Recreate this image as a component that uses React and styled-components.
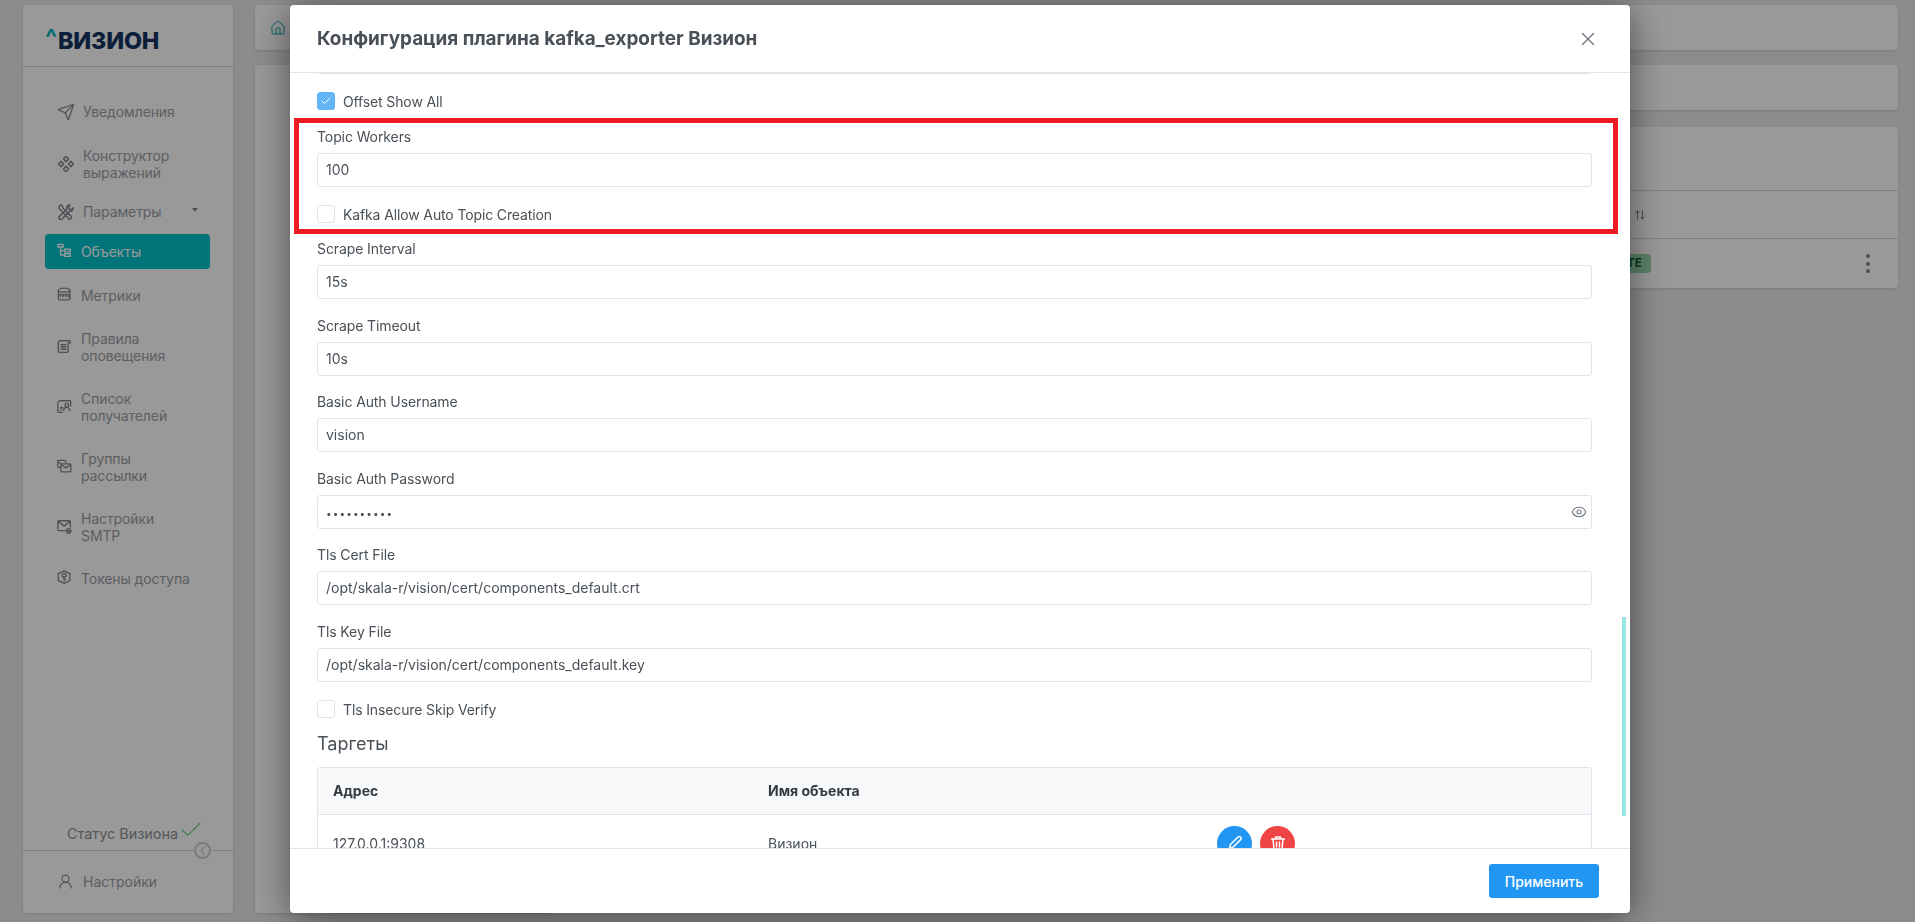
import React from "react";
import styled, { createGlobalStyle } from "styled-components";
import { X, Eye, Check, ChevronLeft, Home, ArrowUpDown, Send, UserRound } from "lucide-react";

const Global = createGlobalStyle`
  html, body { margin: 0; padding: 0; height: 100%; overflow: hidden; }
  body { font-family: Inter, "Noto Sans", sans-serif; font-size: 14px; color: #495057; background: #e8eaed; }
  * { box-sizing: border-box; }
`;

const Page = styled.div`
  display: flex; gap: 22px; height: 922px; padding: 5px 17px 9px 23px;
`;
const Card = styled.div`
  background: #fff; border-radius: 4px; box-shadow: 0 1px 3px rgba(0,0,0,.12);
`;
const Sidebar = styled(Card)`
  width: 210px; flex: none; display: flex; flex-direction: column;
`;
const LogoBar = styled.div`
  height: 62px; flex: none; padding: 20px 0 0 22px; border-bottom: 1px solid #d5d8dd;
  display: flex; align-items: flex-start;
`;
const Caret = styled.span`
  color: #00b5bb; font: 700 25px/20px Inter, sans-serif; width: 13px; margin-top: 3px; flex: none;
`;
const LogoWord = styled.span`
  color: #14335f; font: 800 23.4px/34px Inter, sans-serif; letter-spacing: -.2px; margin-top: -1px;
`;
const Nav = styled.nav`
  display: flex; flex-direction: column; padding: 27px 23px 0 22px; flex: 1;
`;
const NavItem = styled.div`
  display: flex; align-items: center; gap: 8px; padding: 0 12px; border-radius: 4px; position: relative;
  min-height: ${p => (p.$double ? 51 : 35)}px;
  margin-bottom: ${p => p.$mb ?? 9}px;
  background: ${p => (p.$active ? "#00c1c8" : "transparent")};
  color: ${p => (p.$active ? "#fff" : "#9a9ea5")};
  font-size: 14px; line-height: 17px; letter-spacing: -.1px;
  svg { flex: none; color: ${p => (p.$active ? "#fff" : "#84888e")}; }
`;
const DropArrow = styled.span`
  position: absolute; right: 12px; top: 14px; width: 0; height: 0;
  border: 3.5px solid transparent; border-top: 4px solid #84888e;
`;
const StatusRow = styled.div`
  display: flex; align-items: center; gap: 0; padding-left: 44px; height: 34px; color: #8e9298; font-size: 14.4px;
  svg { color: #6fd08c; margin-top: -6px; }
`;
const SideFooter = styled.div`
  position: relative; height: 63px; border-top: 1px solid #d5d8dd; padding: 13px 0 0 34px;
  display: flex; gap: 9px; align-items: flex-start; color: #9a9ea5; line-height: 36px;
  svg { margin-top: 9px; color: #84888e; }
`;
const FoldButton = styled.span`
  position: absolute; right: 22px; top: -9px; width: 17px; height: 17px; border-radius: 50%;
  border: 2px solid #c9ccd1; background: #fff; display: flex; align-items: center; justify-content: center; color: #c9ccd1;
  svg { margin: 0; color: #c9ccd1; }
`;
const Main = styled.main`
  flex: 1; display: flex; flex-direction: column; gap: 15px; min-width: 0;
`;
const Crumbs = styled(Card)`
  height: 45px; flex: none; display: flex; align-items: center; padding-left: 15px; color: #00a3a8;
`;
const Columns = styled.div`
  flex: 1; display: flex; gap: 17px; min-height: 0;
`;
const TreePanel = styled(Card)`
  width: 300px; flex: none;
`;
const RightColumn = styled.div`
  flex: 1; display: flex; flex-direction: column; gap: 17px;
`;
const Filters = styled(Card)`
  height: 45px;
`;
const TableCard = styled(Card)`
  display: flex; flex-direction: column;
`;
const TableHead = styled.div`
  height: 64px; border-bottom: 1px solid #d5d8dd;
`;
const SortRow = styled.div`
  height: 48px; border-bottom: 1px solid #d5d8dd; display: flex; align-items: center; justify-content: flex-end;
  padding-right: 252px; color: #6f7378;
`;
const DataRow = styled.div`
  height: 49px; display: flex; align-items: center; justify-content: flex-end; padding-right: 28px; gap: 215px;
`;
const Badge = styled.span`
  height: 19px; padding: 0 9px; border-radius: 4px; background: #9ad9ac; color: #0d5f2c;
  font: 700 11.5px/19px Inter, sans-serif; letter-spacing: .3px;
`;
const Dots = styled.span`
  display: flex; flex-direction: column; gap: 3.5px;
  i { width: 4px; height: 4px; border-radius: 50%; background: #7e8388; display: block; }
`;

const Overlay = styled.div`
  position: fixed; inset: 0; background: rgba(0,0,0,.4); display: flex; padding: 5px 285px 9.5px 290px;
`;
const Modal = styled.section`
  flex: 1; background: #fff; border-radius: 4px; display: flex; flex-direction: column;
  box-shadow: 0 4px 36px rgba(0,0,0,.5); position: relative; overflow: hidden;
`;
const ModalHeader = styled.header`
  height: 68px; flex: none; border-bottom: 1px solid #e3e5ea; display: flex; align-items: center;
  justify-content: space-between; padding: 0 31px 0 27px;
`;
const Title = styled.h2`
  margin: 0; font: 700 18.9px/24px Inter, sans-serif; color: #495057;
`;
const CloseBtn = styled.span`
  display: flex; color: #6c757d;
`;
const ModalBody = styled.div`
  flex: 1; min-height: 0; overflow: hidden; padding: 0 38px 0 27px; position: relative;
`;
const ScrollContent = styled.div`
  margin-top: -33px; display: flex; flex-direction: column;
`;
const Field = styled.div`
  margin-bottom: 16.6px;
`;
const Label = styled.div`
  font-size: 14px; line-height: 20px; margin-bottom: 6px; color: #495057; letter-spacing: -.1px;
`;
const Input = styled.div`
  height: 34px; border: 1px solid #e1e4e9; border-radius: 3px; padding: 0 8px; line-height: 32px;
  font-size: 14px; color: #495057; position: relative; white-space: nowrap;
`;
const Secret = styled.span`
  letter-spacing: 1.1px; font-size: 10px;
`;
const EyeSlot = styled.span`
  position: absolute; right: 4px; top: 8px; display: flex; color: #6c757d;
`;
const CheckRow = styled.div`
  display: flex; align-items: center; gap: 8px; height: 18px; margin: 1.4px 0 ${p => p.$mb ?? 16}px; letter-spacing: -.13px;
`;
const CheckText = styled.span`
  line-height: 18px; padding-top: 2px;
`;
const Box = styled.span`
  width: 18px; height: 18px; flex: none; border-radius: 3px; display: flex; align-items: center; justify-content: center;
  background: ${p => (p.$on ? "#64b5f6" : "#fff")};
  border: 1.5px solid ${p => (p.$on ? "#64b5f6" : "#dfe2e7")};
  color: #fff;
`;
const Highlighted = styled.div`
  position: relative; display: flex; flex-direction: column;
  &::after {
    content: ""; position: absolute; inset: -9px -26px 5px -23px; border: 5px solid #ed1c24; pointer-events: none;
  }
`;
const SectionTitle = styled.h3`
  margin: -2px 0 11px; font: 400 18px/24px Inter, sans-serif; color: #495057;
`;
const Table = styled.div`
  border: 1px solid #e1e4e9; border-radius: 3px 3px 0 0;
`;
const Row = styled.div`
  display: grid; grid-template-columns: 435px 449px 1fr; align-items: center; padding-left: 15px;
  height: ${p => (p.$head ? 47 : 58)}px;
  background: ${p => (p.$head ? "#f8f9fa" : "#fff")};
  font-weight: ${p => (p.$head ? 700 : 400)};
  color: ${p => (p.$head ? "#343a40" : "#495057")};
  border-bottom: 1px solid #e1e4e9;
`;
const Actions = styled.div`
  display: flex; gap: 8px;
`;
const RoundBtn = styled.span`
  width: 35px; height: 35px; border-radius: 50%; display: flex; align-items: center; justify-content: center;
  background: ${p => p.$color}; color: #fff;
`;
const Scrollbar = styled.div`
  position: absolute; right: 4px; top: 544px; width: 4px; height: 199px; background: #98e5e5;
`;
const ModalFooter = styled.footer`
  height: 65px; flex: none; border-top: 1px solid #e3e5ea; display: flex; align-items: center; justify-content: flex-end;
  padding: 0 31px 0 0;
`;
const Apply = styled.button`
  width: 110px; height: 34px; border: 0; border-radius: 3px; background: #2196f3; color: #fff;
  font: 500 14px/34px Inter, sans-serif;
`;

const Ico = ({ s = 18, children }) => (
  <svg width={s} height={s} viewBox="0 0 18 18" fill="none" stroke="currentColor" strokeWidth="1.5" strokeLinecap="round" strokeLinejoin="round">{children}</svg>
);
const DiamondsIcon = () => (
  <Ico><path d="M9 1.5 11.6 4 9 6.6 6.4 4ZM9 11.4 11.6 14 9 16.5 6.4 14ZM4 6.4 6.6 9 4 11.6 1.5 9ZM14 6.4 16.5 9 14 11.6 11.4 9Z" /></Ico>
);
const ToolsIcon = () => (
  <Ico><path d="M2 3.5 3.5 2 5.5 3.2 5.8 5 14.5 13.7A1.9 1.9 0 0 1 12 16L3.5 7 2 5.5ZM13 1.8A3.4 3.4 0 0 0 9.8 6L2.4 13.4A1.8 1.8 0 0 0 5 16L12.2 8.4A3.4 3.4 0 0 0 16.2 4.8L14 6.8 11.9 6 11.4 4Z" /></Ico>
);
const TreeIcon = () => (
  <Ico s={16}><rect x="1" y="1.5" width="6" height="3" /><rect x="8.5" y="7" width="6.5" height="3" /><rect x="8.5" y="12" width="6.5" height="3" /><path d="M4 4.5V13.5H8.5M4 8.5H8.5" /></Ico>
);
const MeterIcon = () => (
  <Ico s={16}><ellipse cx="8" cy="3.6" rx="6.5" ry="2.3" /><path d="M1.5 3.6V13a1.5 1.5 0 0 0 1.5 1.5H13a1.5 1.5 0 0 0 1.5-1.5V3.6M1.5 8.5H14.5M4 8.5V11M7 8.5V11M10 8.5V11M13 8.5V11" /></Ico>
);
const ScrollIcon = () => (
  <Ico s={16}><path d="M3.5 2H13.5A1.5 1.5 0 0 1 15 3.5V4.5H12.5V14A1.5 1.5 0 0 1 11 15H3A1.5 1.5 0 0 1 1.5 13.5V4A2 2 0 0 1 3.5 2ZM4.5 6.5H10M4.5 9H10M4.5 11.5H10" /></Ico>
);
const RecipientsIcon = () => (
  <Ico s={16}><path d="M3 2H14.5A.8.8 0 0 1 15.3 2.8V8M1 5V14.3A.8.8 0 0 0 1.8 15H6M1 5A3 3 0 0 1 3 2" /><circle cx="11" cy="7" r="2" /><path d="M7.5 13A3.5 3.5 0 0 1 14.5 13M4 12.5 6 9.5M4 9.5H6.5" /></Ico>
);
const MailGroupIcon = () => (
  <Ico s={16}><path d="M3.5 9.5H1.5A.8.8 0 0 1 .8 8.7V2.5A.8.8 0 0 1 1.5 1.5H9A.8.8 0 0 1 9.8 2.5V4.5M1 3 5 6" /><rect x="4.5" y="5.5" width="11" height="9" rx=".8" /><path d="M4.8 6.3 10 10 15.2 6.3" /></Ico>
);
const MailCogIcon = () => (
  <Ico s={16}><path d="M9 13H1.8A.8.8 0 0 1 1 12.2V2.8A.8.8 0 0 1 1.8 2H14.2A.8.8 0 0 1 15 2.8V9M1.3 2.5 8 8 14.7 2.5" /><circle cx="13" cy="13.5" r="1" /><circle cx="13" cy="13.5" r="2.7" strokeDasharray="1.5 1" /></Ico>
);
const TokenIcon = () => (
  <Ico s={16}><path d="M8 1 14.5 4V12L8 15 1.5 12V4Z" /><circle cx="8" cy="6" r="2.2" /><path d="M8 8.2V12.5M8 10.5H9.5" /></Ico>
);
const PencilIcon = () => (
  <Ico s={18}><path d="M3.5 14.5 4.5 10.5 12 3a1.6 1.6 0 0 1 2.6 2.6L7 13.2Z" /></Ico>
);
const TrashIcon = () => (
  <Ico s={18}><path d="M2.5 5H15.5M6.5 5V3H11.5V5M4 5 5 15.5H13L14 5M7.5 8V13M10.5 8V13" /></Ico>
);

const textFields = [
  ["Scrape Interval", "15s"],
  ["Scrape Timeout", "10s"],
  ["Basic Auth Username", "vision"],
];
const fileFields = [
  ["Tls Cert File", "/opt/skala-r/vision/cert/components_default.crt"],
  ["Tls Key File", "/opt/skala-r/vision/cert/components_default.key"],
];

export default function App() {
  return (
    <>
      <Global />
      <Page>
        <Sidebar>
          <LogoBar><Caret>^</Caret><LogoWord>ВИЗИОН</LogoWord></LogoBar>
          <Nav>
            <NavItem><Send size={18} strokeWidth={1.6} />Уведомления</NavItem>
            <NavItem $double $mb={5}><DiamondsIcon /><span>Конструктор<br />выражений</span></NavItem>
            <NavItem $mb={4.5}><ToolsIcon />Параметры<DropArrow /></NavItem>
            <NavItem $active><TreeIcon />Объекты</NavItem>
            <NavItem><MeterIcon />Метрики</NavItem>
            <NavItem $double><ScrollIcon /><span>Правила<br />оповещения</span></NavItem>
            <NavItem $double><RecipientsIcon /><span>Список<br />получателей</span></NavItem>
            <NavItem $double><MailGroupIcon /><span>Группы<br />рассылки</span></NavItem>
            <NavItem $double $mb={8}><MailCogIcon /><span>Настройки<br />SMTP</span></NavItem>
            <NavItem><TokenIcon />Токены доступа</NavItem>
          </Nav>
          <StatusRow>Статус Визиона<Check size={26} strokeWidth={1.1} /></StatusRow>
          <SideFooter>
            <FoldButton><ChevronLeft size={13} strokeWidth={2.4} /></FoldButton>
            <UserRound size={17} strokeWidth={1.7} />Настройки
          </SideFooter>
        </Sidebar>
        <Main>
          <Crumbs><Home size={16} strokeWidth={1.5} /></Crumbs>
          <Columns>
            <TreePanel />
            <RightColumn>
              <Filters />
              <TableCard>
                <TableHead />
                <SortRow><ArrowUpDown size={12} strokeWidth={1.8} /></SortRow>
                <DataRow><Badge>COMPLETE</Badge><Dots><i /><i /><i /></Dots></DataRow>
              </TableCard>
            </RightColumn>
          </Columns>
        </Main>
      </Page>
      <Overlay>
        <Modal>
          <ModalHeader>
            <Title>Конфигурация плагина kafka_exporter Визион</Title>
            <CloseBtn><X size={22} strokeWidth={1.3} /></CloseBtn>
          </ModalHeader>
          <ModalBody>
            <ScrollContent>
              <Field><Input /></Field>
              <CheckRow $mb={17}><Box $on><Check size={12} strokeWidth={2} /></Box><CheckText>Offset Show All</CheckText></CheckRow>
              <Highlighted>
                <Field>
                  <Label>Topic Workers</Label>
                  <Input>100</Input>
                </Field>
                <CheckRow><Box /><CheckText>Kafka Allow Auto Topic Creation</CheckText></CheckRow>
              </Highlighted>
              {textFields.map(([l, v]) => (
                <Field key={l}><Label>{l}</Label><Input>{v}</Input></Field>
              ))}
              <Field>
                <Label>Basic Auth Password</Label>
                <Input><Secret>••••••••••</Secret><EyeSlot><Eye size={16} strokeWidth={1.6} /></EyeSlot></Input>
              </Field>
              {fileFields.map(([l, v]) => (
                <Field key={l}><Label>{l}</Label><Input>{v}</Input></Field>
              ))}
              <CheckRow><Box /><CheckText>Tls Insecure Skip Verify</CheckText></CheckRow>
              <SectionTitle>Таргеты</SectionTitle>
              <Table>
                <Row $head><span>Адрес</span><span>Имя объекта</span><span /></Row>
                <Row>
                  <span>127.0.0.1:9308</span>
                  <span>Визион</span>
                  <Actions>
                    <RoundBtn $color="#2196f3"><PencilIcon /></RoundBtn>
                    <RoundBtn $color="#ef4444"><TrashIcon /></RoundBtn>
                  </Actions>
                </Row>
              </Table>
            </ScrollContent>
            <Scrollbar />
          </ModalBody>
          <ModalFooter><Apply>Применить</Apply></ModalFooter>
        </Modal>
      </Overlay>
    </>
  );
}
